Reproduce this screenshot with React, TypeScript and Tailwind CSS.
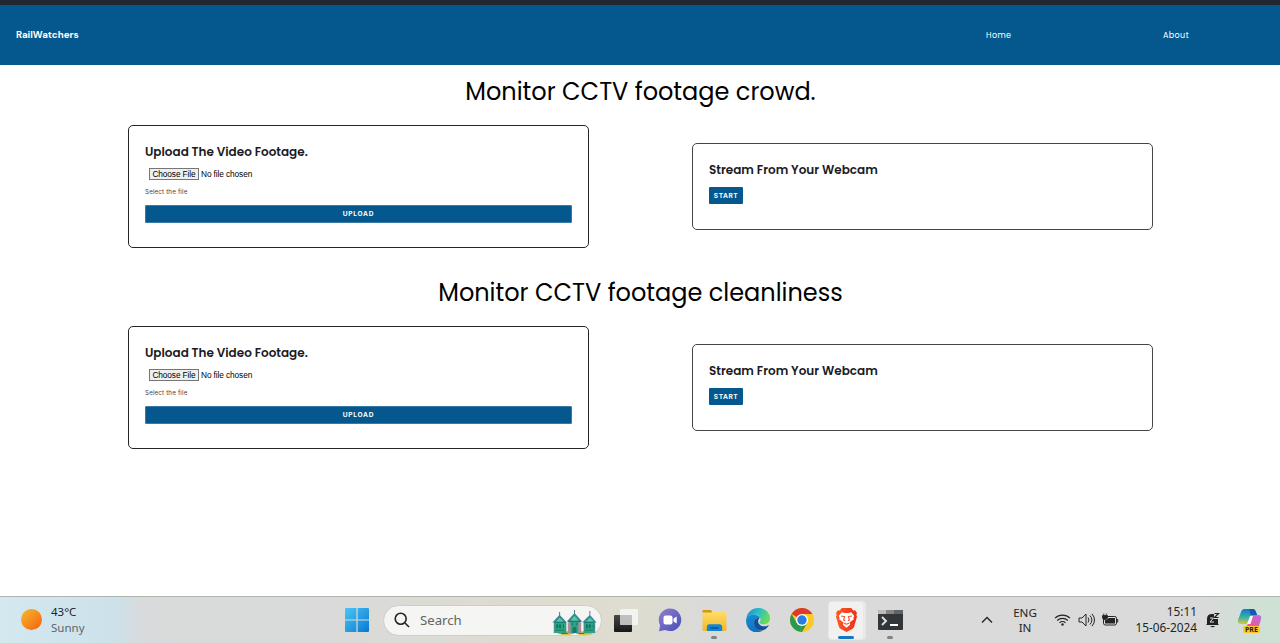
import React from "react";

const heading = "font-['Poppins',sans-serif]";

function UploadCard() {
  return (
    <section className="h-[123px] w-[461px] rounded-[5px] border border-[#252525] px-4 pt-4">
      <h2 className={`${heading} h-5 whitespace-nowrap text-[12px] font-semibold leading-[19px] text-[#1b1b1f]`}>
        Upload The Video Footage.
      </h2>
      <div className="ml-1 mt-[6px] flex h-3 items-center font-['Liberation_Sans',sans-serif] text-[8.3px] tracking-[-0.1px] text-black">
        <button className="h-3 w-[50px] whitespace-nowrap border border-[#767676] bg-[#efefef] leading-[9px]">Choose File</button>
        <span className="ml-[2px] whitespace-nowrap leading-3">No file chosen</span>
      </div>
      <p className="mt-[6px] h-3 font-['Inter',sans-serif] text-[6.2px] leading-3 tracking-[0.17px] text-[#444]">Select the file</p>
      <button className="mt-[7px] flex h-[18px] w-full items-center justify-center rounded-[1px] border border-[#397ba6] bg-[#04588d] pt-px font-['Inter',sans-serif] text-[6.6px] font-bold tracking-[0.7px] text-white">
        UPLOAD
      </button>
    </section>
  );
}

function StreamCard() {
  return (
    <section className="h-[87px] w-[461px] rounded-[5px] border border-[#454545] px-4 pt-4">
      <h2 className={`${heading} h-5 whitespace-nowrap text-[12px] font-semibold leading-[19px] text-[#1b1b1f]`}>
        Stream From Your Webcam
      </h2>
      <button className="mt-[7px] flex h-[17px] w-[34px] items-center justify-center rounded-[1px] bg-[#04588d] pt-[2px] font-['Inter',sans-serif] text-[6.6px] font-bold tracking-[0.5px] text-white">
        START
      </button>
    </section>
  );
}

function Monitor({ title }: { title: string }) {
  return (
    <section className="h-[201px] w-full px-32">
      <h1 className={`${heading} flex h-[60px] items-start justify-center whitespace-nowrap pl-px pt-2 text-[24px] font-normal leading-[38px] text-black`}>
        {title}
      </h1>
      <div className="flex w-[1025px] items-center justify-between">
        <UploadCard />
        <StreamCard />
      </div>
    </section>
  );
}

function WindowsLogo() {
  return (
    <svg width="24" height="24" viewBox="0 0 24 24">
      <defs>
        <linearGradient id="win" x1="0" y1="0" x2="1" y2="1" gradientUnits="objectBoundingBox">
          <stop stopColor="#4bc6f6" />
          <stop offset="1" stopColor="#0878d1" />
        </linearGradient>
      </defs>
      <path d="M1 0h10.4v11.4H0V1q0-1 1-1zM12.6 0H23q1 0 1 1v10.4H12.6zM0 12.6h11.4V24H1q-1 0-1-1zM12.6 12.6H24V23q0 1-1 1H12.6z" fill="url(#win)" />
    </svg>
  );
}

function Palaces() {
  return (
    <svg width="45" height="25" viewBox="0 0 46 26">
      <ellipse cx="14" cy="24" rx="9" ry="1.8" fill="#c6b51c" />
      <ellipse cx="33" cy="24" rx="9" ry="1.8" fill="#c6b51c" />
      <path d="M2 13h12v11H2zM17 12h12v12H17zM33 13h11v11H33z" fill="#2ba780" />
      <path d="M0 13l7.5-8 7.5 8zM15 12l8-9 8 9zM31 13l8-8 7 8z" fill="#3a8995" />
      <path d="M4 12l3.5-4 4 4zM19 11l4-5 4 5zM35 12l4-4 4 4z" fill="#55cca1" />
      <path d="M7.5 2v4M23 0v4M39 1v4" stroke="#50748e" />
      <path d="M2 13v11M14 13v11M33 13v11M44 13v11" stroke="#37858a" />
      <path d="M16 13h3v11h-3zM27 13h3v11h-3z" fill="#b28d9e" />
      <path d="M2 13h12M16 12h14M33 13h11M3 21h10M34 21h9" stroke="#18796f" />
      <path d="M4 15h2v4H4zM7 15h2v4H7zM11 15h1v4h-1zM35 15h2v4h-2zM38 15h2v4h-2zM42 15h1v4h-1zM20 13h1v3h-1zM25 13h1v3h-1z" fill="#176d68" />
      <path d="M21 24v-5q2-3 4 0v5z" fill="#147a6c" />
      <path d="M9 24h7v1H9zM27 24h6v1h-6z" fill="#9b5421" />
    </svg>
  );
}

function TaskView() {
  return (
    <svg width="24" height="23" viewBox="0 0 24 23">
      <defs><linearGradient id="task" x1="0" y1="0" x2="0" y2="1"><stop stopColor="#484848" /><stop offset="1" stopColor="#171717" /></linearGradient></defs>
      <rect y="6" width="18" height="17" rx="1" fill="url(#task)" />
      <rect x="6" width="18" height="16" rx="1" fill="#f8f8f8" fillOpacity=".82" />
      <path d="M6 6h12v10H6z" fill="#aaa" fillOpacity=".5" />
    </svg>
  );
}

function Chat() {
  return (
    <svg width="24" height="24" viewBox="0 0 24 24">
      <defs><linearGradient id="chat" x1="0" y1="0" x2="1" y2="1"><stop stopColor="#9280cf" /><stop offset="1" stopColor="#474eb9" /></linearGradient></defs>
      <path d="M12 .5a11.3 11.3 0 1 1-4.7 21.6L1 23.2l1.1-6A11.3 11.3 0 0 1 12 .5z" fill="url(#chat)" />
      <rect x="5.5" y="7.5" width="9" height="9" rx="2" fill="#fff" />
      <path d="M15.5 10.5l3.2-2v7l-3.2-2z" fill="#fff" />
    </svg>
  );
}

function Folder() {
  return (
    <svg width="25" height="23" viewBox="0 0 25 24">
      <defs><linearGradient id="folder" x1="0" y1="0" x2="0" y2="1"><stop stopColor="#ffdf69" /><stop offset="1" stopColor="#f4b72a" /></linearGradient></defs>
      <path d="M1 1h7.5l3 3H0V2q0-1 1-1z" fill="#d49b0b" />
      <path d="M0 4h9l2-2h13q1 0 1 1v19q0 1-1 1H1q-1 0-1-1z" fill="url(#folder)" />
      <path d="M4.5 23v-4q0-3 3-3h10q3 0 3 3v4z" fill="#1684d2" />
      <rect x="8" y="19" width="9" height="1.5" rx=".7" fill="#075297" />
    </svg>
  );
}

function Edge() {
  return (
    <svg width="24" height="24" viewBox="0 0 24 24">
      <defs>
        <linearGradient id="edgeTop" x1="0" y1="0" x2="1" y2=".45"><stop stopColor="#1589cc" /><stop offset=".5" stopColor="#2abdca" /><stop offset="1" stopColor="#65dd58" /></linearGradient>
        <linearGradient id="edgeLeft" x1="0" y1="0" x2=".5" y2="1"><stop stopColor="#168fd4" /><stop offset="1" stopColor="#1170bd" /></linearGradient>
      </defs>
      <path d="M.3 10.8C1.2 4.2 6 0 12 0c7 0 12 5 12 10.2 0 4-3 6.1-6.2 6.1-2.6 0-4.4-1.2-4.4-2.1 0-.7 1.2-1.2 1.2-3 0-2.4-2.4-4.4-5.9-4.4C4.8 6.8 1.5 8.5.3 10.8z" fill="url(#edgeTop)" />
      <path d="M.2 11.3C1 8.3 4.5 6.5 8.7 6.8c3.3.2 5.3 2 5.8 3.7-1.3-.9-3-.9-4.4.2-2.3 2-2.4 6.8.7 10 1.4 1.5 3 2.3 5.4 2.4C7.8 27 0 21.6 0 12z" fill="url(#edgeLeft)" />
      <path d="M9.7 11c-2.3 2-2.3 6.8.8 9.8 3.3 3.3 8.6 2.3 12-2.7.4-.6.1-1-.5-.7-4.5 2.3-9.9-.1-9.9-4.2 0-1.2.6-2.1 1.3-2.8-1.2-.5-2.6-.4-3.7.6z" fill="#104f9c" />
    </svg>
  );
}

function Chrome() {
  return (
    <svg width="24" height="24" viewBox="0 0 24 24">
      <circle cx="12" cy="12" r="12" fill="#fbca26" />
      <path d="M1.6 6A12 12 0 0 1 22.4 6H12v6z" fill="#df392e" />
      <path d="M1.6 6l5.2 9L12 18l-2 5.8A12 12 0 0 1 1.6 6z" fill="#279b4c" />
      <path d="M12 18l5.2-3-5.2 9q-1 0-2-.2z" fill="#279b4c" />
      <circle cx="12" cy="12" r="6" fill="white" />
      <circle cx="12" cy="12" r="4.7" fill="#287de1" />
    </svg>
  );
}

function Brave() {
  return (
    <svg width="21" height="24" viewBox="0 0 22 25">
      <defs><linearGradient id="brave" x1="0" y1="0" x2="1" y2="0"><stop stopColor="#fb5b25" /><stop offset="1" stopColor="#ed3018" /></linearGradient></defs>
      <path d="M6 0h10l2 2.5 2-.3 2 3-.7 2 .7 2-3.2 11L17 22l-6 3-6-3-1.8-1.8L0 9.2l.7-2-.7-2 2-3 2 .3z" fill="url(#brave)" />
      <path d="M6 4.3l3 .8h4l3-.8 3.2 4-1 1.5.5 2-4.6 3.3.7 2.3L11 20.5l-3.8-3.1.7-2.3-4.6-3.3.5-2-1-1.5z" fill="white" />
      <path d="M5.3 8.2l3.7.7-1 3.5 1.5 1M16.7 8.2L13 8.9l1 3.5-1.5 1M8.5 16l2.5 1 2.5-1" fill="none" stroke="#f14a24" strokeWidth="1.1" />
    </svg>
  );
}

function Terminal() {
  return (
    <svg width="25" height="20" viewBox="0 0 25 20">
      <rect width="25" height="20" rx="1" fill="#333638" />
      <path d="M1 0h7v4H0V1q0-1 1-1z" fill="#bcbcbc" />
      <path d="M8 0h8v4H8z" fill="#858585" /><path d="M16 0h8q1 0 1 1v3h-9z" fill="#626262" />
      <path d="M4 7l4 4-4 4" fill="none" stroke="#ddd" strokeWidth="2" />
      <path d="M12 15h8" stroke="#fff" strokeWidth="2" />
    </svg>
  );
}

function Copilot() {
  return (
    <svg width="24" height="24" viewBox="0 0 24 24">
      <defs>
        <linearGradient id="co1" x1="0" y1="0" x2="0" y2="1"><stop stopColor="#1476d4" /><stop offset=".55" stopColor="#35b5a0" /><stop offset="1" stopColor="#e1c43a" /></linearGradient>
        <linearGradient id="co2" x1="1" y1="0" x2="0" y2="1"><stop stopColor="#b76be8" /><stop offset="1" stopColor="#f35886" /></linearGradient>
      </defs>
      <path d="M6 1h9q2 0 3 3l1 3h-4q-2 0-3 3l-2 6H3q-4 0-3-4L3 4q1-3 3-3z" fill="url(#co1)" />
      <path d="M11 1h4q2 0 3 3l1 3h-5q-2 0-2-3z" fill="#1556b6" />
      <path d="M14 7h6q4 0 3 4l-2 7H9l3-8q1-3 2-3z" fill="url(#co2)" />
      <path d="M12 8h3l-2.5 8H9z" fill="#f8f5ff" />
    </svg>
  );
}

function AppIcon({ children, active, running }: { children: React.ReactNode; active?: boolean; running?: boolean }) {
  return (
    <div className={`relative flex h-[39px] w-9 items-center justify-center rounded-[4px] ${active ? "border border-[#e7e7e7] bg-[#f1f1f1] shadow-[2px_0_0_#e8e8e8]" : ""}`}>
      {children}
      {(active || running) && <span className={`absolute h-[3px] rounded-full ${active ? "bottom-0 w-4 bg-[#1676c3]" : "bottom-px w-[6px] bg-[#818181]"}`} />}
    </div>
  );
}

function Tray() {
  return (
    <div className="ml-auto flex h-full items-center font-['Noto_Sans',sans-serif] text-[#242424]">
      <svg width="12" height="8" viewBox="0 0 12 8" fill="none" stroke="currentColor" strokeWidth="1.4"><path d="M1 6.5L6 1.5l5 5" /></svg>
      <div className="mb-px ml-4 w-8 text-center text-[11.6px] leading-[15px]"><div>ENG</div><div>IN</div></div>
      <svg className="ml-[13px]" width="17" height="14" viewBox="0 0 17 14" fill="none" stroke="currentColor" strokeWidth="1.1">
        <path d="M1 5.2a10.8 10.8 0 0 1 15 0M3.2 7.5a7.6 7.6 0 0 1 10.6 0M5.5 9.8a4.3 4.3 0 0 1 6 0" /><circle cx="8.5" cy="11.5" r="1.2" fill="currentColor" stroke="none" />
      </svg>
      <svg className="ml-[7px]" width="17" height="14" viewBox="0 0 17 14" fill="none" stroke="currentColor" strokeWidth="1">
        <path d="M1 5h3l4-4v12L4 9H1zM10 4.5q2 2.5 0 5M12 2.5q3.8 4.5 0 9M14 .8q5 6.2 0 12.4" />
      </svg>
      <svg className="ml-[7px]" width="17" height="14" viewBox="0 0 17 14">
        <rect x="1.5" y="3.5" width="13" height="8.5" rx="1.8" fill="#ddd" stroke="currentColor" /><path d="M3 7.5L7 5h6v5.5H3zM15.2 6h1v3.5h-1z" fill="currentColor" /><path d="M.5 2.5h5v2.8L3 7 .5 5.3zM1.7.5v2M4.3.5v2" fill="currentColor" stroke="currentColor" strokeWidth=".8" />
      </svg>
      <div className="mb-[2px] ml-[14px] w-[64px] whitespace-nowrap text-right text-[11.8px] leading-4"><div>15:11</div><div>15-06-2024</div></div>
      <svg className="ml-2" width="15" height="17" viewBox="0 0 15 17"><path d="M2 12V7q0-5 5-5h2v5h4v5l1 1H1z" fill="#222" /><path d="M5 14h5q-2 2.5-5 0" fill="#222" /><path d="M9.5 1.5h4l-4 4h4" fill="none" stroke="#222" strokeWidth="1.2" /><path d="M5 6h3.5L5 10h4" fill="none" stroke="#ddd" /></svg>
      <div className="relative ml-[18px] mr-[18px] h-6 w-6"><Copilot /><span className="absolute -bottom-px left-[5px] rounded-[2px] bg-[#fdc725] px-[2px] text-[7px] font-bold leading-[7px]">PRE</span></div>
    </div>
  );
}

export default function App() {
  return (
    <div className="flex h-[643px] w-[1280px] flex-col overflow-hidden bg-white">
      <div className="h-[5px] shrink-0 bg-[#222831]" />
      <header className={`${heading} flex h-[60px] shrink-0 items-center bg-[#04588d] pl-4 text-white`}>
        <strong className="w-[970px] pt-px font-['DM_Sans','Poppins',sans-serif] text-[9.7px] font-bold">RailWatchers</strong>
        <nav className="flex pt-px text-[8px] font-normal tracking-[0.4px]">
          <a className="w-[177px]">Home</a><a>About</a>
        </nav>
      </header>
      <main className="flex-1">
        <Monitor title="Monitor CCTV footage crowd." />
        <Monitor title="Monitor CCTV footage cleanliness" />
      </main>
      <footer className="flex h-[47px] shrink-0 items-center border-t border-[#afb4ad] bg-[linear-gradient(90deg,#d4e8f0_0px,#cce1ea_115px,#d9dadb_145px,#dadada_330px,#dedbcf_540px,#deddcf_630px,#dadada_710px,#dadada_1200px,#cfe1d5_1260px,#cfe1d5_1280px)]">
        <div className="flex w-[345px] items-center pl-[21px] font-['Noto_Sans',sans-serif]">
          <span className="mb-[2px] h-[21px] w-[21px] rounded-full bg-linear-to-br from-[#f4b92e] to-[#f25c0c]" />
          <div className="ml-[9px] text-[11.5px] leading-4 text-[#242424]"><div>43°C</div><div className="text-[#606568]">Sunny</div></div>
        </div>
        <WindowsLogo />
        <div className="ml-[14px] flex h-[31px] w-[219px] items-center rounded-full border border-[#cdcdca] bg-[#f5f5f3] pl-[10px] pr-1">
          <svg width="16" height="16" viewBox="0 0 16 16" fill="none" stroke="#242424" strokeWidth="1.6"><circle cx="6.7" cy="6.7" r="5.5" /><path d="M11 11l4 4" /></svg>
          <span className="ml-[10px] pt-px font-['Noto_Sans',sans-serif] text-[13.2px] text-[#636363]">Search</span>
          <span className="ml-auto pt-1"><Palaces /></span>
        </div>
        <div className="ml-[6px] flex items-center gap-2">
          <AppIcon><TaskView /></AppIcon><AppIcon><Chat /></AppIcon><AppIcon running><Folder /></AppIcon><AppIcon><Edge /></AppIcon><AppIcon><Chrome /></AppIcon><AppIcon active><Brave /></AppIcon><AppIcon running><Terminal /></AppIcon>
        </div>
        <Tray />
      </footer>
    </div>
  );
}
